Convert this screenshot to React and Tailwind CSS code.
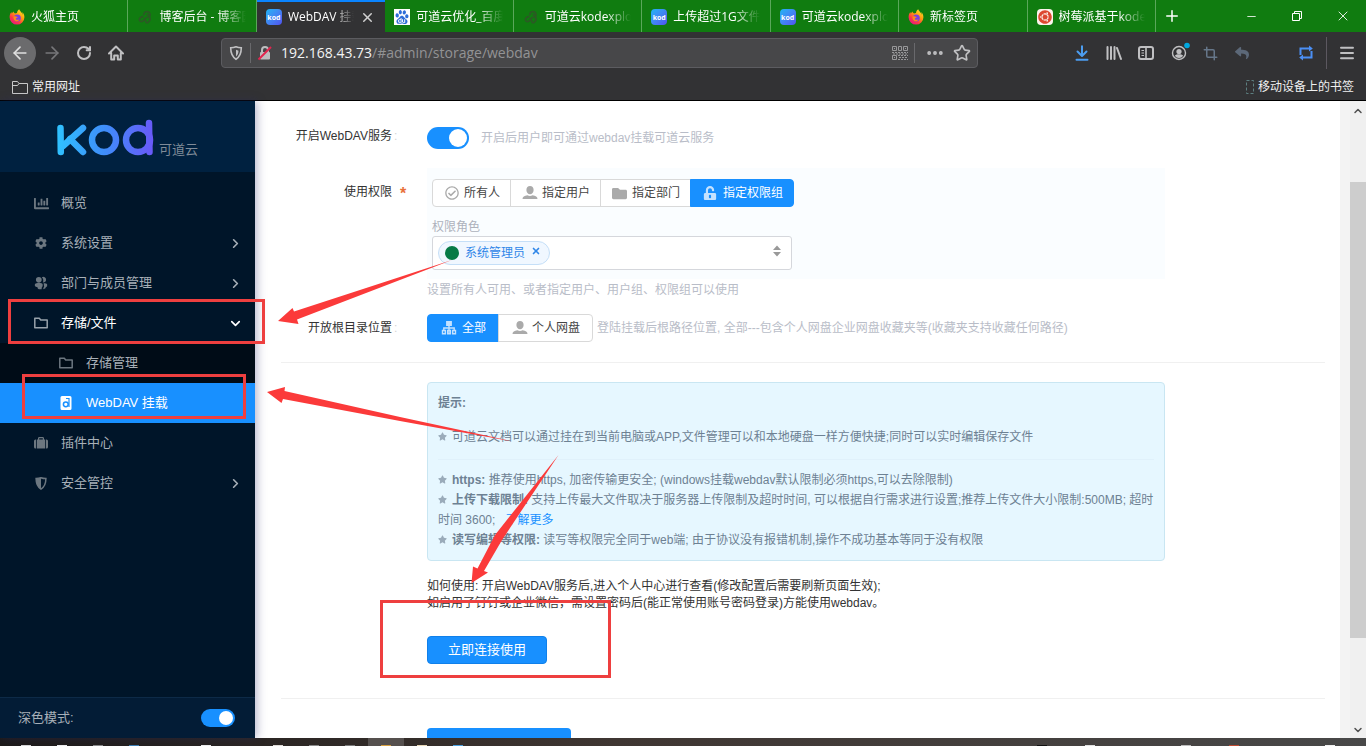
import React from "react";
import {
  ArrowLeft, ArrowRight, ChevronDown, ChevronRight, Crop, Ellipsis, Menu, Minus, Plus, RotateCw, Star, X,
} from "lucide-react";
import {
  FaChartBar, FaCog, FaFolder, FaRegCheckCircle, FaReply, FaStar, FaUbuntu, FaUnlockAlt,
} from "react-icons/fa";
import { SiBaidu } from "react-icons/si";

/* ---------- icons ---------- */

function FirefoxIcon() {
  return (
    <svg viewBox="0 0 16 16" className="size-4 shrink-0">
      <defs>
        <linearGradient id="ff-body" x1="13" y1="1" x2="3" y2="15" gradientUnits="userSpaceOnUse">
          <stop offset="0" stopColor="#ffe226" />
          <stop offset="0.4" stopColor="#ff980e" />
          <stop offset="0.7" stopColor="#ff3647" />
          <stop offset="1" stopColor="#e31587" />
        </linearGradient>
      </defs>
      <path
        fill="url(#ff-body)"
        d="M14.900 5.400c-.4-.9-1.100-1.800-1.700-2.100.5 1 .8 1.900.9 2.600C13.200 3.700 11.700 2.800 10.500.9c-.1-.2-.2-.4-.2-.6C8.700 1.200 8.100 2.800 8 3.900c-.7 0-1.400.2-2 .5-.8-.3-1.500-1-1.700-1.800-.5.3-.8.9-.9 1.500-.3 0-.6.3-.7.5-.2-.3-.2-1.300-.2-1.500C1.200 4.400.6 6.300.6 8.200a7.400 7.400 0 0 0 14.800 0c0-1-.2-2-.5-2.800Z"
      />
      <circle cx="8.300" cy="8.900" r="3.500" fill="#7a3fe0" />
      <path fill="#ff8a16" d="M4.600 7.600c.6-.7 1.800-.5 2.500-.1.600.3 1.500.2 1.700.6 0 .7-1.800.9-2.100 1.800.6 1.200 2.500 1.200 3.700.3-.6 1.900-2.600 2.500-4.100 1.800-1.500-.8-2.200-2.700-1.700-4.400Z" />
    </svg>
  );
}

function SwirlIcon() {
  return (
    <svg viewBox="0 0 16 16" className="size-4 shrink-0" fill="none" stroke="#2b5a24" strokeWidth="1.800">
      <path d="M7 6a3 3 0 1 1 4 2.500M10 5c2.500 2 4 5 2 7.500s-4 .5-3-1.500M6.500 7.500C4.500 7.500 2 9 2.500 11s3 2 4 .5 2-3 4-3.500" />
    </svg>
  );
}

function KodIcon() {
  return (
    <span className="flex size-4 shrink-0 items-center justify-center rounded-sm bg-linear-to-br from-[#18b4f5] to-[#5050f0] text-[7px] leading-none font-bold text-white">
      kod
    </span>
  );
}

function BaiduIcon() {
  return (
    <span className="flex size-4 shrink-0 items-center justify-center bg-white text-[#2d6cd8]">
      <SiBaidu size={14} />
    </span>
  );
}

function UbuntuIcon() {
  return (
    <span className="flex size-4 shrink-0 items-center justify-center rounded-sm bg-[#fdf3ec] text-[#dd4830]">
      <FaUbuntu size={14} />
    </span>
  );
}

function HomeIcon() {
  return (
    <svg viewBox="0 0 16 16" className="size-4" fill="none" stroke="currentColor" strokeWidth="2" strokeLinejoin="round" strokeLinecap="round">
      <path d="M1 8.500 8 1.500l7 7M3.200 8v6.500h3V10.500h3.600v4h3V8" />
    </svg>
  );
}

function TrackingIcon() {
  return (
    <svg viewBox="0 0 16 16" className="size-4" fill="none" stroke="currentColor" strokeWidth="1.600">
      <path d="M8 1.800c2 .8 3.700 1 5.300 1 0 5-.8 8.600-5.300 11.400C3.500 11.400 2.700 7.800 2.700 2.800c1.600 0 3.300-.2 5.300-1Z" />
      <path d="M8 4.800v6.700c1.800-1.500 2.400-3.300 2.500-5.700C9.600 5.600 8.900 5.200 8 4.800Z" fill="currentColor" stroke="none" />
    </svg>
  );
}

function InsecureIcon() {
  return (
    <svg viewBox="0 0 16 16" className="size-4">
      <path d="M5 7V5a3 3 0 0 1 6 0v2" fill="none" stroke="#bdbdbf" strokeWidth="2" />
      <rect x="3" y="7" width="10" height="7.500" rx="1" fill="#bdbdbf" />
      <path d="M1.500 14.500 14 2" stroke="#e2254f" strokeWidth="2" />
    </svg>
  );
}

function QrIcon() {
  return (
    <svg viewBox="0 0 16 16" className="size-4" fill="none" stroke="#98989a">
      <path d="M.5 1.500h4v4h-4zM6.500 1.500h3v4h-3zM11.500 1.500h4v4h-4zM.5 10.500h4v4h-4zM2 3.500h1M13 3.500h1M2 12.500h1" />
      <path d="M0 7.500h16M1 9h14M6 10.500h10M7 12.500h8M6 14.500h10" strokeDasharray="2 1" />
    </svg>
  );
}

function DownloadIcon() {
  return (
    <svg viewBox="0 0 16 16" className="size-4" fill="none" stroke="#4c9df0" strokeWidth="2" strokeLinecap="round" strokeLinejoin="round">
      <path d="M8 1.200v9.500M3.500 6.500 8 11l4.500-4.500M2.500 14.800h11" />
    </svg>
  );
}

function LibraryIcon() {
  return (
    <svg viewBox="0 0 16 16" className="size-4" fill="none" stroke="currentColor" strokeWidth="2" strokeLinecap="round">
      <path d="M1.500 2v12M5 2v12M8.500 2v12M11 3l4 11" />
    </svg>
  );
}

function SidebarIcon() {
  return (
    <svg viewBox="0 0 16 16" className="size-4" fill="none" stroke="currentColor">
      <rect x="1" y="2" width="14" height="12" rx="2" strokeWidth="2" />
      <path d="M8 2v12" strokeWidth="1.600" />
      <path d="M3.500 5.500h2.500M3.500 8h2.500M3.500 10.500h2.500" strokeWidth="1" />
    </svg>
  );
}

function AccountIcon() {
  return (
    <svg viewBox="0 0 20 20" className="size-5">
      <circle cx="9" cy="11" r="6.500" fill="none" stroke="currentColor" strokeWidth="1.400" />
      <circle cx="9" cy="9.500" r="2.600" fill="currentColor" />
      <path d="M4.800 13.800c1-1.200 2.500-1.500 4.200-1.500s3.200.3 4.200 1.500A5 5 0 0 1 9 16a5 5 0 0 1-4.200-2.200Z" fill="currentColor" />
      <circle cx="17" cy="3.500" r="2.800" fill="#00a8e0" />
    </svg>
  );
}

function SwapIcon() {
  return (
    <svg viewBox="0 0 16 16" className="size-4" fill="none" stroke="#4b8ff5" strokeWidth="2">
      <path d="M2.500 10V3.500H12M13.500 6v6.500H4" />
      <path d="M11 .5 14.800 3.500 11 6.500ZM5 9.500 1.200 12.500 5 15.500Z" fill="#4b8ff5" stroke="none" />
    </svg>
  );
}

function RestoreIcon() {
  return (
    <svg viewBox="0 0 12 12" className="size-3" fill="none" stroke="currentColor">
      <path d="M1.500 3.500h7v7h-7zM3.500 3.500v-2h7v7h-2" />
    </svg>
  );
}

function BookmarkFolderIcon() {
  return (
    <svg viewBox="0 0 16 16" className="size-4" fill="none" stroke="#c8c8c8">
      <path d="M.5 14.500v-12h5l1.500 2h8.500v10zM.5 6.500h5l1.500-2" />
    </svg>
  );
}

function DeviceIcon() {
  return (
    <svg viewBox="0 0 8 14" className="h-3.5 w-2" fill="none" stroke="#5d7f80" strokeDasharray="3 2">
      <rect x=".5" y=".5" width="7" height="13" />
    </svg>
  );
}

function OutlineFolderIcon() {
  return (
    <svg viewBox="0 0 14 12" className="h-3 w-3.5" fill="none" stroke="currentColor" strokeWidth="1.500" strokeLinejoin="round">
      <path d="M.8 10.800V1.200h4.500l1.400 1.700h6.500v7.900z" />
    </svg>
  );
}

function MembersIcon() {
  return (
    <svg viewBox="0 0 16 16" className="size-3.5" fill="currentColor">
      <path d="M5.500 1a3.300 3.300 0 0 1 3.300 3.300c0 1.900-1.400 3.300-3.300 3.300S2.200 6.200 2.200 4.300A3.300 3.300 0 0 1 5.500 1Z" />
      <path d="M1 9.300c1-1 2.500-1.300 4.700-1.300s3.600.3 4.200 1.300v2.500c-.9.4-1 1.500-1.200 3.200-1 .2-2 .2-3 0-1-.2-1.400-.5-1.700-2.200C2.500 12.500 1.500 12 1 11.500Z" />
      <path d="M9 1.300a3.200 3.200 0 0 1 4.800 2.900c0 2-1.500 3.300-3.700 3.200 1-2.100.7-4.500-1.100-6.100ZM11 8.200c2 0 3.500.3 4 1.300v2.200c-.3.500-.8.900-1.400 1-.3 1.400-.9 2.100-3 2.300.1-1.300.3-2 1-2.400Z" />
    </svg>
  );
}

function BriefcaseIcon() {
  return (
    <svg viewBox="0 0 14 12" className="h-3 w-3.5" fill="currentColor">
      <path d="M1.500 2.500H2v9h-.5A1.500 1.500 0 0 1 0 10V4a1.500 1.500 0 0 1 1.500-1.500ZM12.500 2.500H12v9h.5A1.500 1.500 0 0 0 14 10V4a1.500 1.500 0 0 0-1.500-1.500Z" />
      <path d="M2.800 2.500H4V1.300C4 .6 4.600 0 5.300 0h3.400c.7 0 1.300.6 1.300 1.300v1.200h1.200v9H2.800ZM5.200 1.200v1.300h3.600V1.200Z" />
    </svg>
  );
}

function GuardIcon() {
  return (
    <svg viewBox="0 0 12 13" className="h-[13px] w-3">
      <path d="M6 .8c1.700.6 3.200.8 4.900.8 0 5-1 8.200-4.900 10.500C2.100 9.800 1.100 6.600 1.100 1.600c1.700 0 3.200-.2 4.900-.8Z" fill="none" stroke="currentColor" strokeWidth="1.500" />
      <path d="M1.100 1.600c1.700 0 3.200-.2 4.900-.8v11.300C2.100 9.800 1.100 6.600 1.100 1.600Z" fill="currentColor" />
    </svg>
  );
}

function DiskIcon() {
  return (
    <svg viewBox="0 0 14 16" className="h-4 w-3.5">
      <path d="M3 1h8a1.500 1.500 0 0 1 1.500 1.500v11A1.500 1.500 0 0 1 11 15H3a1.500 1.500 0 0 1-1.500-1.500v-11A1.500 1.500 0 0 1 3 1Z" fill="#fff" />
      <circle cx="6.800" cy="9.300" r="2.400" fill="none" stroke="#1890ff" strokeWidth="1.500" />
      <path d="M7 3.500h3V12" fill="none" stroke="#1890ff" strokeWidth="1.200" />
    </svg>
  );
}

function PersonIcon() {
  return (
    <svg viewBox="0 0 16 16" className="size-4" fill="currentColor">
      <path d="M8 1c2.200 0 3.600 1.600 3.600 3.900S10 9.200 8 9.200 4.400 7.200 4.400 4.900 5.800 1 8 1Z" />
      <path d="M.5 14c0-2.300 1.800-3.300 5-3.800.8.500 1.600.7 2.500.7s1.700-.2 2.500-.7c3.200.5 5 1.500 5 3.800Z" />
    </svg>
  );
}

function TreeIcon() {
  return (
    <svg viewBox="0 0 16 16" className="size-4" fill="none" stroke="currentColor" strokeWidth="1.400">
      <rect x="5.800" y="1.700" width="4.400" height="3.600" fill="currentColor" />
      <path d="M8 5.500v8M2.800 10.500V8h10.400v2.500" />
      <path d="M1.500 10.500h2.800v3.300H1.500zM6.600 10.500h2.800v3.300H6.600zM11.700 10.500h2.800v3.300h-2.800z" />
    </svg>
  );
}

function KodLogo() {
  return (
    <svg viewBox="0 0 98 40" className="h-10 w-[98px]" fill="none" stroke="url(#kod-ink)" strokeWidth="6.500" strokeLinecap="round" strokeLinejoin="round" role="img" aria-label="kod">
      <defs>
        <linearGradient id="kod-ink" x1="0" y1="20" x2="98" y2="24" gradientUnits="userSpaceOnUse">
          <stop offset="0" stopColor="#2fc3ff" />
          <stop offset="0.5" stopColor="#3f8dfa" />
          <stop offset="1" stopColor="#6a58f8" />
        </linearGradient>
      </defs>
      <polyline points="4.500,11 4.800,35" />
      <polyline points="27,11 7,29" />
      <polyline points="14,22 27,35" />
      <circle cx="48" cy="23" r="12" />
      <circle cx="82" cy="23" r="12" />
      <polyline points="93,6 93.500,35" />
    </svg>
  );
}

/* ---------- browser chrome ---------- */

const tabs = [
  { icon: FirefoxIcon, title: "火狐主页" },
  { icon: SwirlIcon, title: "博客后台 - 博客园" },
  { icon: KodIcon, title: "WebDAV 挂载", active: true },
  { icon: BaiduIcon, title: "可道云优化_百度搜索" },
  { icon: SwirlIcon, title: "可道云kodexplorer" },
  { icon: KodIcon, title: "上传超过1G文件失败" },
  { icon: KodIcon, title: "可道云kodexplorer" },
  { icon: FirefoxIcon, title: "新标签页" },
  { icon: UbuntuIcon, title: "树莓派基于kodexplorer" },
];

function TabStrip() {
  return (
    <div className="flex h-8 shrink-0 bg-[#107c10] text-xs text-white">
      <div className="grid max-w-[1156px] flex-1 grid-cols-9" role="tablist">
        {tabs.map((t, i) => {
          const Icon = t.icon;
          return (
            <div
              key={i}
              className={
                t.active
                  ? "flex min-w-0 items-center gap-1.5 border-t-2 border-[#0a84ff] bg-[#323234] pr-2.5 pl-[9px]"
                  : "flex min-w-0 items-center gap-1.5 border-r border-[#5aa75a] pt-0.5 pr-2.5 pl-[9px]"
              }
            >
              <Icon />
              <button
                role="tab"
                aria-selected={!!t.active}
                className="min-w-0 flex-1 overflow-hidden mask-r-from-70% text-left whitespace-nowrap"
              >
                {t.title}
              </button>
              {t.active && (
                <button aria-label="关闭标签页">
                  <X size={15} strokeWidth={2.4} className="text-[#d0d0d0]" />
                </button>
              )}
            </div>
          );
        })}
      </div>
      <button aria-label="新建标签页" className="flex w-8 items-center justify-center">
        <Plus size={18} strokeWidth={2} />
      </button>
      <div className="ml-auto flex">
        <button aria-label="最小化" className="flex w-[46px] items-center justify-center"><Minus size={13} strokeWidth={1.5} /></button>
        <button aria-label="还原" className="flex w-[46px] items-center justify-center"><RestoreIcon /></button>
        <button aria-label="关闭" className="flex w-[46px] items-center justify-center"><X size={16} strokeWidth={1.3} /></button>
      </div>
    </div>
  );
}

function ToolButton({ label, className = "", children }) {
  return (
    <button aria-label={label} className={"flex h-8 w-8 shrink-0 items-center justify-center " + className}>
      {children}
    </button>
  );
}

function Toolbar() {
  return (
    <div className="flex h-[42px] shrink-0 items-center bg-[#323234] pr-[3px] pl-1 text-[#c0c0c2]">
      <ToolButton label="后退" className="rounded-full bg-[#6b6b6d] text-[#e0e0e0]"><ArrowLeft size={20} /></ToolButton>
      <ToolButton label="前进" className="text-[#77777a]"><ArrowRight size={20} /></ToolButton>
      <ToolButton label="刷新"><RotateCw size={16} strokeWidth={3} /></ToolButton>
      <ToolButton label="主页"><HomeIcon /></ToolButton>
      <div className="mr-[88px] ml-[89px] flex h-[30px] flex-1 items-center rounded-sm border border-[#5c5c60] bg-[#474749] px-1.5">
        <TrackingIcon />
        <span className="mx-1.5 h-5 w-px bg-[#69696c]" />
        <InsecureIcon />
        <div className="ml-2 flex-1 text-sm leading-5 text-[#939395]">
          <span className="text-[#f4f4f4]">192.168.43.73</span>/#admin/storage/webdav
        </div>
        <QrIcon />
        <span className="mx-1.5 h-5 w-px bg-[#69696c]" />
        <button aria-label="页面操作" className="mx-1"><Ellipsis size={20} strokeWidth={2.6} /></button>
        <button aria-label="添加书签" className="ml-1"><Star size={18} strokeWidth={2.2} /></button>
      </div>
      <ToolButton label="下载"><DownloadIcon /></ToolButton>
      <ToolButton label="我的足迹"><LibraryIcon /></ToolButton>
      <ToolButton label="侧栏"><SidebarIcon /></ToolButton>
      <ToolButton label="账户" className="pb-0.5 pl-1"><AccountIcon /></ToolButton>
      <ToolButton label="截图" className="text-[#66778a]"><Crop size={15} strokeWidth={2.4} /></ToolButton>
      <ToolButton label="撤销" className="mr-8 text-[#5c6878]"><FaReply size={14} /></ToolButton>
      <ToolButton label="同步"><SwapIcon /></ToolButton>
      <span className="mx-1 h-8 w-px bg-[#5c5860]" />
      <ToolButton label="菜单"><Menu size={18} strokeWidth={2.6} /></ToolButton>
    </div>
  );
}

function BookmarksBar() {
  return (
    <div className="flex h-[27px] shrink-0 items-center justify-between border-b border-black bg-[#323234] px-3 text-xs text-[#f0f0f0]">
      <a href="#bookmarks" className="flex items-center gap-1"><BookmarkFolderIcon />常用网址</a>
      <a href="#mobile" className="flex items-center gap-1"><DeviceIcon />移动设备上的书签</a>
    </div>
  );
}

/* ---------- sidebar ---------- */

const menu = [
  { icon: <FaChartBar size={15} />, label: "概览" },
  { icon: <FaCog size={12} />, label: "系统设置", chevron: "right" },
  { icon: <MembersIcon />, label: "部门与成员管理", chevron: "right" },
  {
    icon: <OutlineFolderIcon />, label: "存储/文件", chevron: "down", open: true,
    children: [
      { icon: <OutlineFolderIcon />, label: "存储管理" },
      { icon: <DiskIcon />, label: "WebDAV 挂载", active: true },
    ],
  },
  { icon: <BriefcaseIcon />, label: "插件中心" },
  { icon: <GuardIcon />, label: "安全管控", chevron: "right" },
];

function Switch({ id, size }) {
  const large = size === "lg";
  return (
    <span className={large ? "relative inline-flex h-[22px] w-[42px] shrink-0" : "relative inline-flex h-[18px] w-[34px] shrink-0"}>
      <input
        id={id}
        type="checkbox"
        role="switch"
        defaultChecked
        className="peer size-full cursor-pointer appearance-none rounded-full bg-gray-300 checked:bg-[#1890ff]"
      />
      <span
        className={
          large
            ? "pointer-events-none absolute top-0.5 left-0.5 size-[18px] rounded-full bg-white peer-checked:left-[22px]"
            : "pointer-events-none absolute top-0.5 left-0.5 size-3.5 rounded-full bg-white peer-checked:left-[18px]"
        }
      />
    </span>
  );
}

function Sidebar() {
  return (
    <aside className="z-10 flex w-[255px] shrink-0 flex-col bg-[#001529] text-[13px] text-[#a8b0b8] shadow-[2px_0_9px_rgba(40,40,110,0.35)]">
      <div className="flex h-[71px] shrink-0 items-start bg-[#002140] pt-4 pl-14">
        <KodLogo />
        <span className="ml-[5px] pt-[23px] text-[13px] leading-5 text-[#7f8b98]">可道云</span>
      </div>
      <nav className="flex-1 pt-[11px]">
        {menu.map((m) => (
          <div key={m.label}>
            <a href="#admin" className={m.open ? "flex h-10 items-center pl-8 text-white" : "flex h-10 items-center pl-8"}>
              <span className={m.open ? "flex w-[18px] justify-center text-[#98a2ab]" : "flex w-[18px] justify-center text-[#6c7780]"}>{m.icon}</span>
              <span className="ml-[11px] flex-1">{m.label}</span>
              {m.chevron === "right" && <ChevronRight size={15} strokeWidth={2.6} className="mr-3" />}
              {m.chevron === "down" && <ChevronDown size={15} strokeWidth={2.6} className="mr-3" />}
            </a>
            {m.children && (
              <div className="bg-[#000c17]">
                {m.children.map((c) => (
                  <a
                    key={c.label}
                    href="#admin/storage"
                    className={c.active ? "flex h-10 items-center bg-[#1890ff] pl-[57px] text-white" : "flex h-10 items-center pl-[57px]"}
                  >
                    <span className="flex w-[18px] justify-center text-[#6c7780]">{c.icon}</span>
                    <span className="ml-[11px]">{c.label}</span>
                  </a>
                ))}
              </div>
            )}
          </div>
        ))}
      </nav>
      <div className="flex h-[41px] shrink-0 items-center justify-between border-t border-[#0d2a47] bg-[#031c36] pr-5 pl-[18px]">
        <label htmlFor="dark-mode">深色模式:</label>
        <Switch id="dark-mode" />
      </div>
    </aside>
  );
}

/* ---------- settings form ---------- */

function Row({ label, htmlFor, required, className = "", labelClass, children }) {
  return (
    <div className={"flex items-start " + className}>
      <label htmlFor={htmlFor} className={"flex w-[111px] shrink-0 items-center justify-end whitespace-nowrap text-[#333] " + labelClass}>
        {label}
      </label>
      <span className={"flex w-[35px] shrink-0 items-center " + labelClass}>
        {required ? <span className="pt-1 pl-2 text-base font-bold text-[#e8703a]">*</span> : <span className="pl-0.5 text-[#d5d5d5]">:</span>}
      </span>
      <div className="min-w-0 flex-1">{children}</div>
    </div>
  );
}

const scopes = [
  { icon: <FaRegCheckCircle size={14} />, label: "所有人" },
  { icon: <PersonIcon />, label: "指定用户" },
  { icon: <FaFolder size={15} />, label: "指定部门" },
  { icon: <FaUnlockAlt size={14} />, label: "指定权限组", active: true },
];

const roots = [
  { icon: <TreeIcon />, label: "全部", active: true },
  { icon: <PersonIcon />, label: "个人网盘" },
];

function ButtonGroup({ items }) {
  return (
    <div className="flex shrink-0">
      {items.map((b) => (
        <button
          key={b.label}
          aria-pressed={!!b.active}
          className={
            b.active
              ? "-ml-px flex h-7 items-center gap-[5px] border border-[#1890ff] bg-[#1890ff] px-2.5 text-white first:ml-0 first:rounded-l-sm first:px-3 last:rounded-r-sm"
              : "-ml-px flex h-7 items-center gap-1 border border-[#d9d9d9] bg-white px-2.5 text-[#444] first:ml-0 first:rounded-l-sm last:rounded-r-sm last:px-3"
          }
        >
          <span className={b.active ? "flex w-[17px] justify-center text-[#c4e2ff]" : "flex w-[17px] justify-center text-[#aaa]"}>{b.icon}</span>
          {b.label}
        </button>
      ))}
    </div>
  );
}

function Bullet({ children }) {
  return (
    <p className="leading-5">
      <FaStar size={9} className="mr-[5px] mb-0.5 inline text-[#9aabba]" />
      {children}
    </p>
  );
}

function Settings() {
  return (
    <main className="min-w-0 flex-1 overflow-hidden bg-white pt-[26px] pr-[15px] pl-[26px] text-xs text-[#333]">
      <Row label="开启WebDAV服务" htmlFor="webdav-on" labelClass="h-[18px]">
        <div className="flex items-center gap-3">
          <Switch id="webdav-on" size="lg" />
          <span className="text-[#b9bdc8]">开启后用户即可通过webdav挂载可道云服务</span>
        </div>
      </Row>

      <Row label="使用权限" required className="mt-[19px]" labelClass="h-12">
        <div className="max-w-[738px] bg-[#fafdff] px-[5px] pt-[11px] pb-[9px]">
          <ButtonGroup items={scopes} />
          <div className="mt-[11px] leading-[18px] text-[#aeb2bc]">权限角色</div>
          <div className="flex h-[34px] max-w-[360px] items-center rounded-[3px] border border-[#d5d7dc] bg-white pr-2 pl-[5px]">
            <span className="flex h-6 items-center rounded-full border border-[#c5dff8] bg-[#f0f7ff] pr-2 pl-1.5 text-[#2f86e8]">
              <span className="size-3.5 rounded-full bg-[#067a46]" />
              <span className="mx-1.5">系统管理员</span>
              <button aria-label="移除 系统管理员" className="mb-1"><X size={10} strokeWidth={4} /></button>
            </span>
            <button aria-label="选择权限角色" className="mb-1 ml-auto">
              <svg viewBox="0 0 12 12" className="size-3" fill="#999">
                <path d="M6 .5 10 5H2ZM6 11.500 2 7h8Z" />
              </svg>
            </button>
          </div>
        </div>
        <p className="mt-0.5 leading-[18px] text-[#b9bdc8]">设置所有人可用、或者指定用户、用户组、权限组可以使用</p>
      </Row>

      <Row label="开放根目录位置" className="mt-[15px]" labelClass="h-7">
        <div className="flex items-center gap-1">
          <ButtonGroup items={roots} />
          <span className="whitespace-nowrap text-[#b9bdc8]">登陆挂载后根路径位置, 全部---包含个人网盘企业网盘收藏夹等(收藏夹支持收藏任何路径)</span>
        </div>
      </Row>

      <hr className="mt-5 border-[#f0f0f0]" />

      <div className="mt-[19px] pl-[146px]">
        <section className="max-w-[738px] rounded-sm border border-[#c9e6f2] bg-[#e6f7ff] px-2.5 py-2.5 text-[#6d8193]">
          <p className="leading-5 font-bold">提示:</p>
          <div className="mt-3.5">
            <Bullet>可道云文档可以通过挂在到当前电脑或APP,文件管理可以和本地硬盘一样方便快捷;同时可以实时编辑保存文件</Bullet>
          </div>
          <hr className="mt-3 mb-2.5 border-[#e0f1fb]" />
          <Bullet><b>https:</b> 推荐使用https, 加密传输更安全; (windows挂载webdav默认限制必须https,可以去除限制)</Bullet>
          <Bullet>
            <b>上传下载限制:</b> 支持上传最大文件取决于服务器上传限制及超时时间, 可以根据自行需求进行设置;推荐上传文件大小限制:500MB; 超时时间 3600;
            <a href="#more" className="ml-2.5 text-[#1890ff]">了解更多</a>
          </Bullet>
          <Bullet><b>读写编辑等权限:</b> 读写等权限完全同于web端; 由于协议没有报错机制,操作不成功基本等同于没有权限</Bullet>
        </section>

        <p className="mt-[17px] leading-[17px]">
          如何使用: 开启WebDAV服务后,进入个人中心进行查看(修改配置后需要刷新页面生效);
          <br />
          如启用了钉钉或企业微信，需设置密码后(能正常使用账号密码登录)方能使用webdav。
        </p>
        <button className="mt-6 h-7 rounded-sm border border-[#1080ea] bg-[#1890ff] px-5 text-[13px] text-white">立即连接使用</button>
      </div>

      <hr className="mt-[34px] border-[#f0f0f0]" />

      <div className="mt-[29px] pl-[146px]">
        <button aria-label="保存" className="h-8 w-36 rounded-sm bg-[#1890ff]" />
      </div>
    </main>
  );
}

function Scrollbars() {
  return (
    <div className="flex shrink-0">
      <div className="w-2.5 bg-[#f3f3f3]" />
      <div className="flex w-4 flex-col items-center bg-[#f0f0f0] text-[#505050]">
        <ChevronDown size={12} strokeWidth={3} className="mt-1 rotate-180" />
        <div className="mt-[65px] h-[456px] w-full bg-[#cdcdcd]" />
        <ChevronDown size={12} strokeWidth={3} className="mt-auto mb-0.5" />
      </div>
    </div>
  );
}

/* ---------- taskbar ---------- */

const taskIcons = ["#d8d8d8", "#f0f0f0", "#8a8a8a", "#3c7fb5", "", "#f0f0f0", "", "#e0dcd8", "#8a8a8a", "#7c7c7c", "#d8a040", "#e8d8b8", "#4aa0e0"];
const trayIcons = ["#111111", "#e0e0e0", "", "#bdbdbd", "#c04a30", "", "#f0f0f0"];

function Taskbar() {
  return (
    <footer className="flex h-2 shrink-0 items-end justify-between overflow-hidden bg-linear-to-r from-[#1d1a19] via-[#3f3632] via-45% to-[#484848] pr-3 pl-2">
      <div className="flex h-full">
        {taskIcons.map((c, i) => (
          <span key={i} className={i === 10 ? "flex w-9 items-end justify-center bg-[#55504e]" : "flex w-9 items-end justify-center"}>
            <span className="h-px w-2.5" style={{ backgroundColor: c || "transparent" }} />
          </span>
        ))}
      </div>
      <div className="flex h-full">
        {trayIcons.map((c, i) => (
          <span key={i} className="flex w-12 items-end justify-center">
            <span className="h-px w-2.5" style={{ backgroundColor: c || "transparent" }} />
          </span>
        ))}
      </div>
    </footer>
  );
}

/* ---------- hand-drawn marks over the page ---------- */

function Marks() {
  return (
    <div className="pointer-events-none absolute inset-0 z-20" aria-hidden="true">
      <div className="absolute top-[299px] left-2 h-[45px] w-[257px] border-3 border-[#ee3f3f]" />
      <div className="absolute top-[374px] left-[22px] h-[45px] w-56 border-3 border-[#ee3f3f]" />
      <div className="absolute top-[600px] left-[380px] h-[78px] w-[231px] border-3 border-[#ee3f3f]" />
      <svg className="absolute top-0 left-0 h-[746px] w-[700px]" viewBox="0 0 700 746" fill="#fb3a3a">
        <path d="M278 321 292.500 308 294 311.500 452 260 297 319.500 298.500 324Z" />
        <path d="M267 392 285 387 284.500 391 400 417 513 441.500 400 421 283 399 281.500 403Z" />
        <path d="M471.500 583 473 566.500 477.500 568.500 495 535 558.500 455 502 540 484 571 488 572.500Z" />
      </svg>
    </div>
  );
}

export default function App() {
  return (
    <div className="relative flex h-screen flex-col overflow-hidden bg-white font-['Liberation_Sans','Noto_Sans_CJK_SC',sans-serif]">
      <header className="shrink-0 font-['Open_Sans','Noto_Sans_CJK_SC',sans-serif]">
        <TabStrip />
        <Toolbar />
        <BookmarksBar />
      </header>
      <div className="flex min-h-0 flex-1">
        <Sidebar />
        <Settings />
        <Scrollbars />
      </div>
      <Taskbar />
      <Marks />
    </div>
  );
}
